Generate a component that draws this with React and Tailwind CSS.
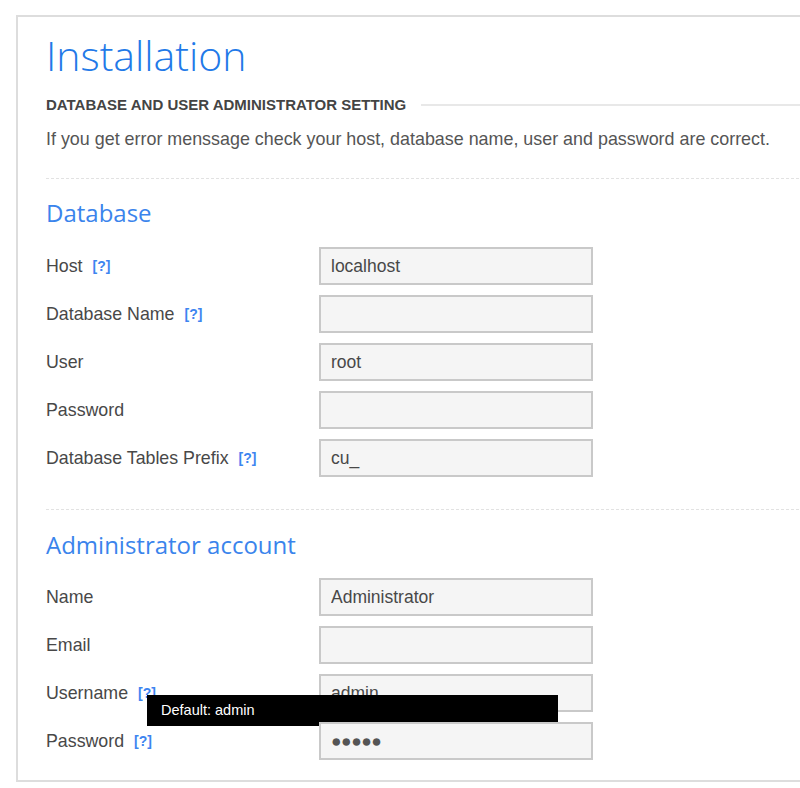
import React from 'react'

const HelpMark = () => (
  <span className="ml-[10px] text-[14px] font-bold text-[#3d85f0] leading-none">[?]</span>
)

const Field = ({ label, help, value, masked, tooltip }) => (
  <div className="relative flex items-center h-[38px]">
    <label className="w-[273px] flex items-center text-[17.8px] text-[#484848]">
      {label}
      {help && <HelpMark />}
    </label>
    {masked ? (
      <div className="w-[274px] h-[38px] border-2 border-[#c9c9c9] bg-[#f5f5f5] pl-[10px] flex items-center text-[17.5px] text-[#555] tracking-[-0.5px]">
        {value}
      </div>
    ) : (
      <input
        readOnly
        defaultValue={value}
        className="w-[274px] h-[38px] border-2 border-[#c9c9c9] bg-[#f5f5f5] pl-[10px] text-[17.5px] text-[#484848] outline-none"
      />
    )}
    {tooltip && (
      <div className="absolute left-[101px] top-[21px] w-[411px] h-[31px] bg-black text-white text-[14.5px] pl-[14px] flex items-center">
        {tooltip}
      </div>
    )}
  </div>
)

const SectionTitle = ({ children }) => (
  <h2 className="font-['Open_Sans',sans-serif] text-[24px] leading-[30px] h-[30px] text-[#3a84ec]">
    {children}
  </h2>
)

export default function App() {
  const dbFields = [
    { label: 'Host', help: true, value: 'localhost' },
    { label: 'Database Name', help: true, value: '' },
    { label: 'User', value: 'root' },
    { label: 'Password', value: '' },
    { label: 'Database Tables Prefix', help: true, value: 'cu_' }
  ]

  const adminFields = [
    { label: 'Name', value: 'Administrator' },
    { label: 'Email', value: '' },
    { label: 'Username', help: true, value: 'admin' },
    { label: 'Password', help: true, value: '●●●●●', masked: true }
  ]

  return (
    <div className="w-[800px] h-[788px] overflow-hidden bg-white font-['Liberation_Sans',Arial,sans-serif]">
      <div className="pt-[15px] pl-[16px]">
        <div className="w-[840px] border-2 border-[#dddddd] pl-[28px] pt-[18px] pb-[20px]">
          <h1 className="font-['Open_Sans',sans-serif] font-light text-[41px] leading-[40px] h-[40px] text-[#2279e8]">
            Installation
          </h1>

          <div className="mt-[20px] h-[20px] flex items-center">
            <h3 className="text-[15px] font-bold text-[#444] leading-[20px]">
              DATABASE AND USER ADMINISTRATOR SETTING
            </h3>
            <div className="flex-1 ml-[15px] h-[2px] bg-[#e8e8e8] -mt-[1px]" />
          </div>

          <p className="mt-[12px] text-[17.9px] leading-[24px] text-[#555]">
            If you get error menssage check your host, database name, user and password are correct.
          </p>

          <div className="mt-[27px] border-t border-dashed border-[#e2e2e2]" />

          <div className="mt-[19px]">
            <SectionTitle>Database</SectionTitle>
          </div>
          <div className="mt-[19px] flex flex-col gap-[10px]">
            {dbFields.map((f) => (
              <Field key={f.label} {...f} />
            ))}
          </div>

          <div className="mt-[32px] border-t border-dashed border-[#e2e2e2]" />

          <div className="mt-[20px]">
            <SectionTitle>Administrator account</SectionTitle>
          </div>
          <div className="mt-[18px] flex flex-col gap-[10px]">
            {adminFields.map((f) => (
              <Field
                key={f.label + f.value}
                {...f}
                tooltip={f.label === 'Username' ? 'Default: admin' : null}
              />
            ))}
          </div>
        </div>
      </div>
    </div>
  )
}
